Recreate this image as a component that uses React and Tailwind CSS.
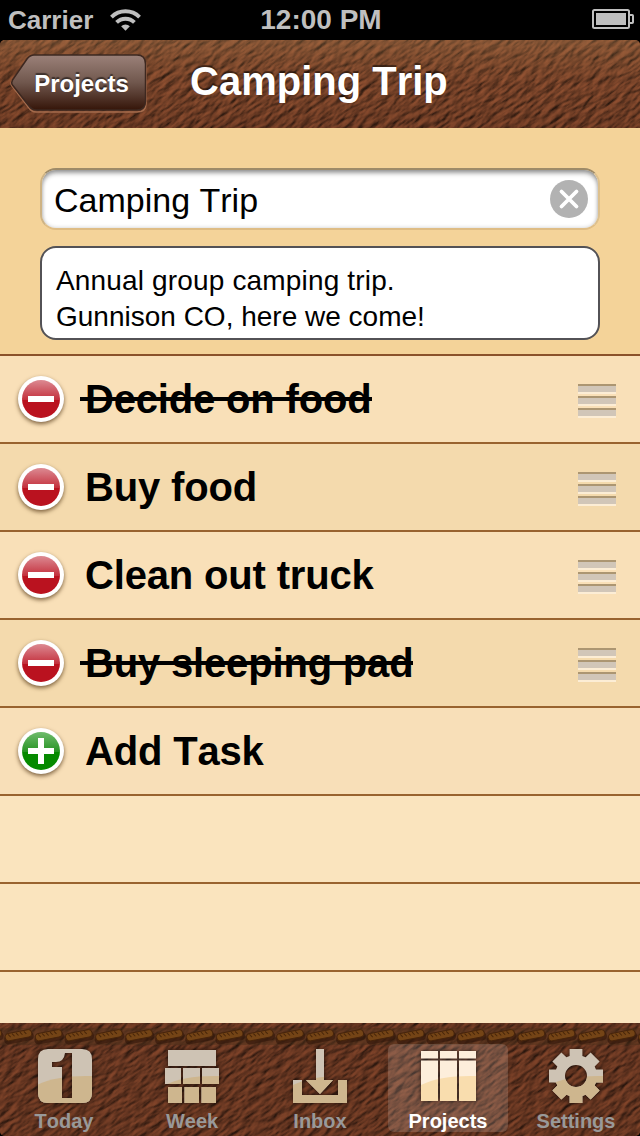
import React from "react";

const FONT = "font-['Liberation_Sans',Arial,sans-serif] [font-kerning:none]";

function Leather({ id, seed, height, dark }) {
  return (
    <svg className="absolute inset-0 h-full w-full" viewBox={`0 0 640 ${height}`} preserveAspectRatio="none" aria-hidden="true">
      <defs>
        <filter id={id} x="0" y="0" width="100%" height="100%" colorInterpolationFilters="sRGB">
          <feTurbulence type="fractalNoise" baseFrequency="0.07 0.2" numOctaves="4" seed={seed} result="n" />
          <feDiffuseLighting in="n" surfaceScale="1.7" diffuseConstant="1.02" lightingColor={dark ? "#83452a" : "#925031"}>
            <feDistantLight azimuth="250" elevation="48" />
          </feDiffuseLighting>
        </filter>
        <linearGradient id={`${id}-shine`} x1="0" y1="0" x2="0" y2="1">
          <stop offset="0" stopColor="#b58a58" stopOpacity="0.3" />
          <stop offset="0.5" stopColor="#a07040" stopOpacity="0.04" />
          <stop offset="1" stopColor="#200800" stopOpacity="0.1" />
        </linearGradient>
      </defs>
      <rect width="640" height={height} fill="#6b3820" />
      <g transform="rotate(-35 320 50)">
        <rect x="-80" y="-350" width="800" height="800" filter={`url(#${id})`} />
      </g>
      {!dark && <rect width="640" height={height} fill={`url(#${id}-shine)`} />}
    </svg>
  );
}

function StatusBar() {
  return (
    <div className="grid h-10 grid-cols-3 items-center bg-black pl-2 pr-1.5 font-bold text-[#bfbfbf]">
      <div className="flex items-center gap-[17px]">
        <span className="text-[26px] leading-10">Carrier</span>
        <svg width="31" height="24" viewBox="0 0 32 24" fill="none" stroke="#bfbfbf" strokeWidth="4">
          <path d="M1.5 9a20.500 20.500 0 0 1 29 0" />
          <path d="M6.800 14.500a13 13 0 0 1 18.400 0" />
          <path d="M11.500 18.500a6.300 6.300 0 0 1 9 0L16 23z" fill="#bfbfbf" stroke="none" />
        </svg>
      </div>
      <span className="text-center text-[28px] leading-10">12:00 PM</span>
      <svg className="mb-0.5 justify-self-end" width="42" height="20" viewBox="0 0 42 20">
        <rect x="1" y="1" width="36" height="18" rx="1.500" fill="none" stroke="#bfbfbf" strokeWidth="2" />
        <rect x="4" y="4" width="30" height="12" fill="#bfbfbf" />
        <path d="M38 6h2.200q.8 0 .8.800v6.400q0 .8-.8.800H38" fill="none" stroke="#bfbfbf" strokeWidth="2" />
      </svg>
    </div>
  );
}

function NavBar() {
  return (
    <header className="bg-black">
      <div className="relative h-22 overflow-hidden rounded-t-[5px]">
        <Leather id="nav-leather" seed={7} height={88} />
        <div className="relative flex h-full items-center pl-2.5 text-white">
          <button className="relative h-[60px] w-[137px] pl-1.5 text-[24px] leading-[54px] font-bold">
            <svg className="absolute inset-0" width="137" height="60" viewBox="0 0 137 60">
              <defs>
                <linearGradient id="back" x1="0" y1="0" x2="0" y2="1">
                  <stop offset="0" stopColor="#9b8179" />
                  <stop offset="0.5" stopColor="#70574d" />
                  <stop offset="1" stopColor="#351509" />
                </linearGradient>
              </defs>
              <path d="M24 3H127Q136 3 136 12V50Q136 58 127 58H26Q22 58 19 54L2 32Q0 30 2 27L17 6Q20 3 24 3Z" fill="none" stroke="#a46b4c" strokeWidth="1.500" />
              <path d="M24 1H127Q135.500 1 135.500 10V47Q135.500 56 127 56H26Q22 56 19 52L2.500 31Q1 29 2.500 26L17 5Q20 1 24 1Z" fill="url(#back)" stroke="#3d2820" strokeWidth="1.500" />
            </svg>
            <span className="relative [text-shadow:0_-2px_1px_rgba(0,0,0,0.5)]">Projects</span>
          </button>
          <h1 className="mb-[7px] ml-[43px] text-[40px] leading-[84px] font-bold [text-shadow:0_-2px_1px_rgba(0,0,0,0.5)]">Camping Trip</h1>
        </div>
      </div>
    </header>
  );
}

function ProjectForm() {
  return (
    <section className="flex h-[228px] shrink-0 flex-col gap-4 border-b-2 border-[#8b522a] bg-[#f4d399] px-10 pt-10 text-black">
      <div className="flex h-[62px] items-center justify-between rounded-[16px] border-2 border-t-[#9e8b69] border-r-[#ddc08d] border-b-[#dfbd85] border-l-[#ceb384] bg-white pr-2.5 pl-3 shadow-[inset_0_4px_5px_-1px_rgba(0,0,0,0.38),inset_0_0_4px_rgba(0,0,0,0.2)]">
        <span className="pt-0.5 text-[34px] leading-[56px]">Camping Trip</span>
        <svg width="38" height="38" viewBox="0 0 38 38">
          <circle cx="19" cy="19" r="19" fill="#b2b2b2" />
          <path d="m11.500 11.500 15 15m0-15-15 15" stroke="#fff" strokeWidth="3.800" strokeLinecap="round" />
        </svg>
      </div>
      <p className="h-[94px] rounded-[16px] border-2 border-[#535256] bg-white px-3.5 pt-[15px] text-[28px] leading-9">
        <span className="tracking-[0.16px]">Annual group camping trip.</span>
        <br />
        Gunnison CO, here we come!
      </p>
    </section>
  );
}

function Badge({ add }) {
  return (
    <svg className="shrink-0 overflow-visible drop-shadow-[0_2px_2px_rgba(60,30,0,0.65)]" width="46" height="46" viewBox="0 0 46 46">
      <defs>
        <linearGradient id={add ? "gloss-add" : "gloss-del"} x1="0" y1="0" x2="0" y2="1">
          <stop offset="0" stopColor={add ? "#6fbb6d" : "#dc8a92"} />
          <stop offset="0.53" stopColor={add ? "#259322" : "#c32e3b"} />
          <stop offset="0.53" stopColor={add ? "#058a00" : "#ba121f"} />
          <stop offset="1" stopColor={add ? "#058a00" : "#ba121f"} />
        </linearGradient>
      </defs>
      <circle cx="23" cy="23" r="23" fill="#fff" />
      <circle cx="23" cy="23" r="19" fill={add ? "url(#gloss-add)" : "url(#gloss-del)"} />
      <path d={add ? "M10 20h10V10h6v10h10v6H26v10h-6V26H10z" : "M10 20h26v6H10z"} fill="#fff" />
    </svg>
  );
}

function Grip() {
  return (
    <div className="mt-[3px] flex w-[38px] flex-col gap-0.5">
      {[0, 1, 2].map((i) => (
        <div key={i} className="h-2.5 border-t-2 border-b-2 border-t-[#ac9672] border-b-[#fcedd5] bg-[#d1c6b8]" />
      ))}
    </div>
  );
}

function TaskRow({ label, done, add, tone }) {
  return (
    <li className={`flex h-22 shrink-0 items-center border-b-2 border-[#99632f] pr-6 pl-[18px] ${tone}`}>
      {label && <Badge add={add} />}
      {label && (
        <span className="relative ml-4 flex-none pl-[5px] text-[40px] leading-[86px] font-bold tracking-[-0.17px] text-black">
          {label}
          {done && <span className="absolute top-[41px] right-0 left-0 h-1 bg-black" />}
        </span>
      )}
      <span className="flex-1" />
      {label && !add && <Grip />}
    </li>
  );
}

// Eight square teeth around a toothless rim of radius ~21, with a round hub hole.
const GEAR =
  Array.from({ length: 8 }, (_, i) => {
    const a = (i * Math.PI) / 4;
    return [
      [-6.4, -20],
      [-6.4, -27],
      [6.4, -27],
      [6.4, -20],
    ]
      .map(([x, y], k) => {
        const px = 27 + x * Math.cos(a) - y * Math.sin(a);
        const py = 27 + x * Math.sin(a) + y * Math.cos(a);
        return `${i === 0 && k === 0 ? "M" : "L"}${px.toFixed(2)} ${py.toFixed(2)}`;
      })
      .join("");
  }).join("") + "ZM27 16a11 11 0 1 0 0 22 11 11 0 1 0 0-22Z";

const TAB_SHAPES = {
  Today: "M11 0h34q10 0 10 10v34q0 10-10 10H11Q1 54 1 44V10Q1 0 11 0ZM28 4h7v45H25V18H15v-5h4q8 0 9-9Z",
  Week: "M3 1h48v16H3zM0 19h16v16H0zM18 19h17v16H18zM37 19h17v16H37zM3 38h14v16H3zM19.500 38H34v16H19.500zM36.500 38H51v16H36.500z",
  Inbox: "M23 0h8v31h9L27 45 13 31h10zM0 31h9v15h36V31h9v23H0z",
  Projects: "M0 2h17v7.500H0zM19 2h17v7.500H19zM38 2h17v7.500H38zM0 11.500h17V52H0zM19 11.500h17V52H19zM38 11.500h17V52H38z",
  Settings: GEAR,
};

function TabIcon({ name, active }) {
  return (
    <svg className="overflow-visible drop-shadow-[0_0_2px_rgba(0,0,0,0.65)]" width="55" height="54" viewBox="0 0 55 54">
      <defs>
        <clipPath id={`shape-${name}`}>
          <path clipRule="evenodd" d={TAB_SHAPES[name]} />
        </clipPath>
      </defs>
      <g clipPath={`url(#shape-${name})`}>
        <rect width="55" height="54" fill={active ? "#fdeedb" : "#cec3b4"} />
        <path d="M0 36Q20 26 55 27V54H0Z" fill={active ? "#f9ddae" : "#ceb68e"} />
      </g>
    </svg>
  );
}

function TabBar() {
  return (
    <nav className="relative h-[113px] shrink-0 overflow-hidden rounded-b-[5px]">
      <Leather id="tab-leather" seed={18} height={113} dark />
      <svg className="absolute inset-x-0 top-0" width="640" height="26" viewBox="0 0 640 26">
        <rect y="5" width="640" height="17" fill="#49301a" opacity="0.4" />
        {Array.from({ length: 23 }, (_, i) => (
          <g key={i} transform={`translate(${(i - 1) * 30.17 + 18.5} 12.5) rotate(-11)`}>
            <rect x="-15" y="-2" width="30" height="9" rx="4.500" fill="#2b1308" opacity="0.55" />
            <rect x="-13.500" y="-4" width="27" height="7.500" rx="3.700" fill="#744416" stroke="#46240c" strokeWidth="1" />
            <path d="M-10-3l2 3m2-3 2 3m2-3 2 3m2-3 2 3m2-3 2 3" stroke="#472509" strokeWidth="1" />
          </g>
        ))}
      </svg>
      <div className="relative flex h-full justify-between px-1 pt-[21px]">
        {["Today", "Week", "Inbox", "Projects", "Settings"].map((name) => {
          const active = name === "Projects";
          return (
            <div key={name} className={`flex h-[88px] w-[120px] flex-col items-center rounded-md pt-[5px] ${active ? "bg-white/15 text-white" : "text-[#999]"}`}>
              <TabIcon name={name} active={active} />
              <span className="mt-1.5 text-[20px] leading-6 font-bold">{name}</span>
            </div>
          );
        })}
      </div>
    </nav>
  );
}

export default function App() {
  return (
    <main className={`flex h-[1136px] w-[640px] flex-col overflow-hidden bg-black ${FONT}`}>
      <StatusBar />
      <NavBar />
      <ProjectForm />
      <ul className="flex h-[667px] shrink-0 flex-col overflow-hidden bg-[#fae4be]">
        <TaskRow label="Decide on food" done tone="bg-[#f9e0b8]" />
        <TaskRow label="Buy food" tone="bg-[#f4daad]" />
        <TaskRow label="Clean out truck" tone="bg-[#f9e0b8]" />
        <TaskRow label="Buy sleeping pad" done tone="bg-[#f4daad]" />
        <TaskRow label="Add Task" add tone="bg-[#f8dfb8]" />
        <TaskRow tone="bg-[#fae4be]" />
        <TaskRow tone="bg-[#fae4be]" />
      </ul>
      <TabBar />
    </main>
  );
}
